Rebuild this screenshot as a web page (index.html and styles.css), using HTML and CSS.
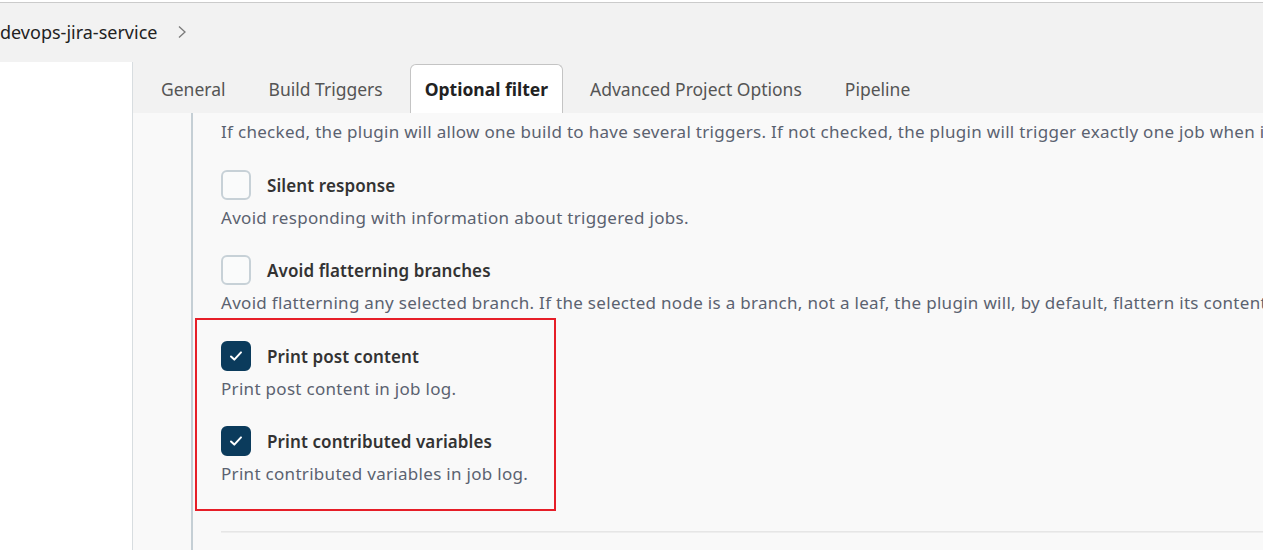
FILE: index.html
```html
<!DOCTYPE html>
<html lang="en">
<head>
<meta charset="utf-8">
<title>devops-jira-service - Optional filter</title>
<link rel="stylesheet" href="styles.css">
</head>
<body>
<header class="topbar">
  <div class="crumb">
    <span class="crumb-text">devops-jira-service</span>
    <svg class="chev" width="10" height="14" viewBox="0 0 10 14"><path d="M2 1.5 L8 7 L2 12.5" fill="none" stroke="#7a7a7a" stroke-width="1.3"/></svg>
  </div>
</header>
<div class="main">
  <aside class="side"></aside>
  <section class="content">
    <nav class="tabs">
      <span class="tab">General</span>
      <span class="tab">Build Triggers</span>
      <span class="tab active">Optional filter</span>
      <span class="tab">Advanced Project Options</span>
      <span class="tab">Pipeline</span>
    </nav>
    <div class="panel">
      <div class="group">
        <p class="desc first">If checked, the plugin will allow one build to have several triggers. If not checked, the plugin will trigger exactly one job when invoked.</p>
        <div class="opt">
          <div class="row"><span class="cb"></span><span class="label">Silent response</span></div>
          <p class="desc">Avoid responding with information about triggered jobs.</p>
        </div>
        <div class="opt">
          <div class="row"><span class="cb"></span><span class="label">Avoid flatterning branches</span></div>
          <p class="desc">Avoid flatterning any selected branch. If the selected node is a branch, not a leaf, the plugin will, by default, flattern its content and trigger all jobs.</p>
        </div>
        <div class="highlight">
          <div class="opt">
            <div class="row"><span class="cb on"><svg width="14" height="12" viewBox="0 0 14 12"><path d="M2 6.5 L5.3 9.6 L12 2.4" fill="none" stroke="#fff" stroke-width="2" stroke-linecap="round" stroke-linejoin="round"/></svg></span><span class="label">Print post content</span></div>
            <p class="desc">Print post content in job log.</p>
          </div>
          <div class="opt">
            <div class="row"><span class="cb on"><svg width="14" height="12" viewBox="0 0 14 12"><path d="M2 6.5 L5.3 9.6 L12 2.4" fill="none" stroke="#fff" stroke-width="2" stroke-linecap="round" stroke-linejoin="round"/></svg></span><span class="label">Print contributed variables</span></div>
            <p class="desc">Print contributed variables in job log.</p>
          </div>
        </div>
        <div class="sep"></div>
      </div>
    </div>
  </section>
</div>
</body>
</html>
```
FILE: styles.css
```css
* { box-sizing: border-box; }
html, body { margin: 0; padding: 0; height: 100%; overflow: hidden; }
body {
  font-family: "Noto Sans", "Open Sans", sans-serif;
  background: #fff;
  color: #333;
  padding-top: 2px;
}
.topbar {
  height: 60px;
  background: #f2f2f2;
  border-top: 1px solid #cbcbcb;
  display: flex;
  align-items: center;
}
.crumb {
  display: flex;
  align-items: center;
  gap: 20px;
  margin-top: -2px;
}
.crumb-text {
  font-size: 18px;
  color: #222;
}
.main {
  display: flex;
  height: 490px;
}
.side {
  width: 133px;
  flex: none;
  background: #fff;
  border-right: 1px solid #d8dde0;
}
.content {
  flex: 1;
  display: flex;
  flex-direction: column;
  min-width: 0;
}
.tabs {
  height: 51px;
  flex: none;
  background: #f2f2f2;
  display: flex;
  align-items: flex-end;
  gap: 11px;
  padding-left: 12px;
}
.tab {
  height: 49px;
  padding: 0 15px;
  display: flex;
  align-items: center;
  font-size: 17.5px;
  color: #555;
  white-space: nowrap;
  border: 1px solid transparent;
  border-bottom: none;
  border-radius: 6px 6px 0 0;
}
.tab.active {
  background: #fff;
  border-color: #c4c4c4;
  color: #222;
  font-weight: 700;
  padding: 0 14px;
}
.panel {
  flex: 1;
  background: #f9f9f9;
  padding-left: 58px;
  overflow: hidden;
}
.group {
  border-left: 2px solid #c5cfd5;
  padding-left: 28px;
  padding-top: 7px;
  height: 100%;
}
.desc {
  margin: 0;
  font-size: 17px;
  line-height: 24px;
  color: #5b6270;
  white-space: nowrap;
  letter-spacing: 0.3px;
}
.desc.first { margin-bottom: 26px; }
.opt { margin-bottom: 25px; }
.opt .desc { margin-top: 6px; }
.row {
  display: flex;
  align-items: center;
  height: 30px;
}
.cb {
  width: 30px;
  height: 30px;
  border: 2px solid #c7d1d7;
  border-radius: 6px;
  background: #fafbfb;
  flex: none;
  display: flex;
  align-items: center;
  justify-content: center;
}
.cb.on {
  background: #0b3b5c;
  border-color: #0b3b5c;
}
.label {
  margin-left: 16px;
  font-size: 17px;
  font-weight: 600;
  color: #333;
  letter-spacing: 0.1px;
}
.highlight {
  margin-left: -26px;
  margin-top: -22px;
  width: 361px;
  border: 2px solid #e61e28;
  padding: 21px 0 0 24px;
}
.highlight .opt:last-child { margin-bottom: 23px; }
.sep {
  margin-top: 20px;
  height: 1px;
  background: #e6e6e6;
  box-shadow: 0 1px 0 #eeeeee;
}
```
